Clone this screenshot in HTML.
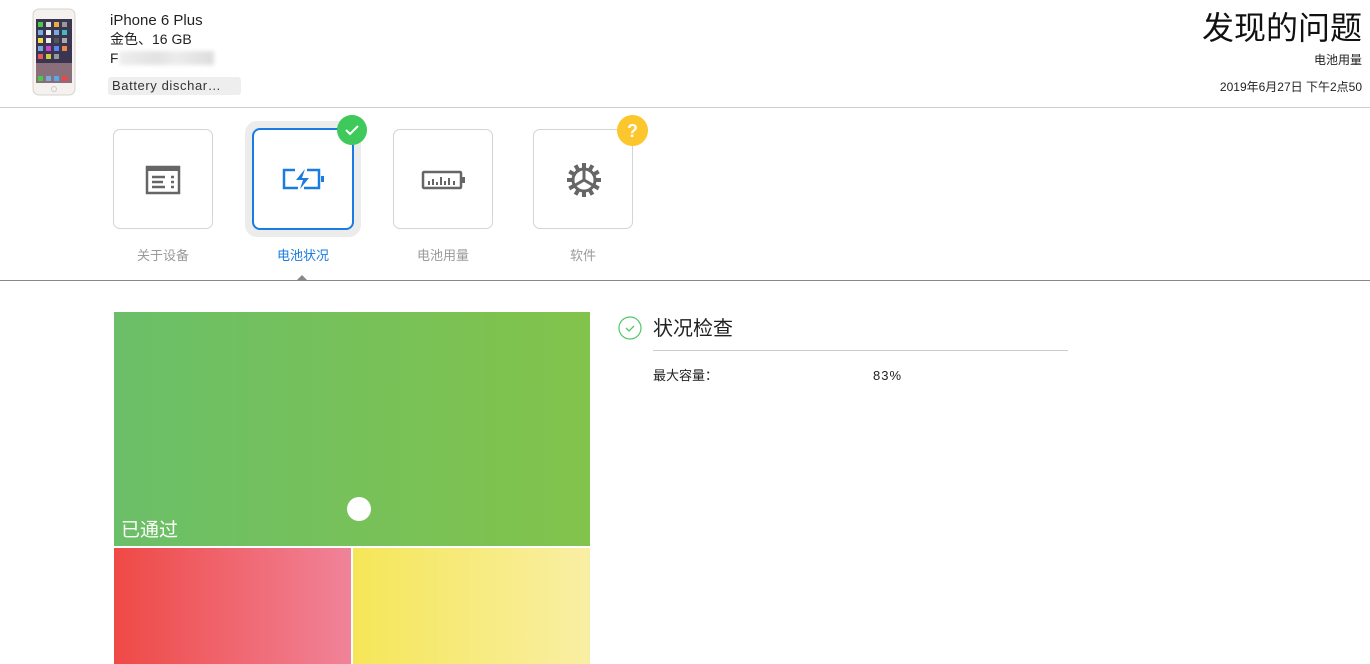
<!DOCTYPE html>
<html><head><meta charset="utf-8">
<style>
*{margin:0;padding:0;box-sizing:border-box}
body{width:1370px;height:664px;overflow:hidden;background:#fff;position:relative;font-family:"Liberation Sans","Noto Sans CJK SC",sans-serif;color:#222}
.a{position:absolute;line-height:1.2}
.tab{position:absolute;top:129px;width:100px;height:100px;border:1px solid #d4d4d4;border-radius:7px;background:#fff}
.lbl{position:absolute;top:245px;width:100px;text-align:center;font-size:13px;color:#9a9a9a}
</style></head><body>
<svg class="a" style="left:32px;top:8px" width="44" height="88" viewBox="0 0 44 88">
<rect x="1" y="1" width="42" height="86" rx="6" fill="#f4f1ee" stroke="#d8d2cc"/>
<rect x="4" y="11" width="36" height="64" fill="#3a3550"/>
<rect x="4" y="55" width="36" height="20" fill="#8a6f7a"/>
<g fill="#7ad">
<rect x="6" y="14" width="5" height="5" fill="#4c4"/><rect x="14" y="14" width="5" height="5" fill="#ddd"/><rect x="22" y="14" width="5" height="5" fill="#ea4"/><rect x="30" y="14" width="5" height="5" fill="#999"/>
<rect x="6" y="22" width="5" height="5"/><rect x="14" y="22" width="5" height="5" fill="#eee"/><rect x="22" y="22" width="5" height="5"/><rect x="30" y="22" width="5" height="5" fill="#4bb"/>
<rect x="6" y="30" width="5" height="5" fill="#ed4"/><rect x="14" y="30" width="5" height="5" fill="#eee"/><rect x="22" y="30" width="5" height="5" fill="#555"/><rect x="30" y="30" width="5" height="5" fill="#aaa"/>
<rect x="6" y="38" width="5" height="5"/><rect x="14" y="38" width="5" height="5" fill="#c4c"/><rect x="22" y="38" width="5" height="5" fill="#58e"/><rect x="30" y="38" width="5" height="5" fill="#e84"/>
<rect x="6" y="46" width="5" height="5" fill="#e55"/><rect x="14" y="46" width="5" height="5" fill="#cc4"/><rect x="22" y="46" width="5" height="5" fill="#999"/>
<rect x="6" y="68" width="5" height="5" fill="#4c4"/><rect x="14" y="68" width="5" height="5"/><rect x="22" y="68" width="5" height="5" fill="#5ae"/><rect x="30" y="68" width="5" height="5" fill="#e44"/>
</g>
<circle cx="22" cy="81" r="2.5" fill="none" stroke="#ccc"/>
</svg>
<div class="a" style="left:110px;top:12px;font-size:15px;color:#222">iPhone 6 Plus</div>
<div class="a" style="left:110px;top:31px;font-size:14px;color:#222">金色、16 GB</div>
<div class="a" style="left:110px;top:50px;font-size:14px;color:#222">F<span style="display:inline-block;width:95px;height:14px;vertical-align:-2px;background:linear-gradient(90deg,#eee,#e2e2e2 40%,#ececec 60%,#ddd);filter:blur(2px)"></span></div>
<div class="a" style="left:108px;top:77px;width:133px;height:18px;background:#eee;border-radius:3px;font-size:13px;letter-spacing:0.6px;color:#333;padding:1px 4px;line-height:16px">Battery dischar…</div>
<div class="a" style="right:8px;top:9px;font-size:32px;color:#111;line-height:38px">发现的问题</div>
<div class="a" style="right:8px;top:53px;font-size:12px;color:#222">电池用量</div>
<div class="a" style="right:8px;top:80px;font-size:12px;color:#222">2019年6月27日 下午2点50</div>
<div class="a" style="left:0;top:107px;width:1370px;height:1px;background:#cfcfcf"></div>

<div class="tab" style="left:113px">
<svg class="a" style="left:31px;top:35px" width="36" height="30" viewBox="0 0 36 30"><rect x="2" y="2" width="32" height="26" fill="none" stroke="#666" stroke-width="2.5"/><rect x="2" y="2" width="32" height="4" fill="#666"/><g stroke="#666" stroke-width="2.5"><line x1="7" y1="12" x2="20" y2="12"/><line x1="7" y1="17" x2="18" y2="17"/><line x1="7" y1="22" x2="20" y2="22"/><line x1="26" y1="12" x2="29" y2="12"/><line x1="26" y1="17" x2="29" y2="17"/><line x1="26" y1="22" x2="29" y2="22"/></g></svg>
</div>
<div class="a" style="left:245px;top:121px;width:116px;height:116px;background:#ececec;border-radius:12px"></div>
<div class="tab" style="left:252px;top:128px;width:102px;height:102px;border:2px solid #1a7be0;border-radius:8px">
<svg class="a" style="left:27px;top:37px" width="46" height="24" viewBox="0 0 46 24"><path d="M14 3H3v18h14" fill="none" stroke="#1a7be0" stroke-width="2.5"/><path d="M26 3h12v18H23" fill="none" stroke="#1a7be0" stroke-width="2.5"/><rect x="40" y="9" width="3" height="6" fill="#1a7be0"/><path d="M24 2L15 13h7l-3 9 9-11h-7z" fill="#1a7be0"/></svg>
</div>
<svg class="a" style="left:337px;top:115px" width="30" height="30"><circle cx="15" cy="15" r="15" fill="#3ec95a"/><path d="M9 15l4 4 8-8" fill="none" stroke="#fff" stroke-width="2"/></svg>
<div class="tab" style="left:393px">
<svg class="a" style="left:27px;top:40px" width="46" height="20" viewBox="0 0 46 20"><rect x="2" y="2" width="38" height="16" rx="1" fill="none" stroke="#666" stroke-width="2.5"/><rect x="41" y="7" width="3" height="6" fill="#666"/><g stroke="#666" stroke-width="2"><line x1="8" y1="11" x2="8" y2="15"/><line x1="12" y1="9" x2="12" y2="15"/><line x1="16" y1="12" x2="16" y2="15"/><line x1="20" y1="7" x2="20" y2="15"/><line x1="24" y1="11" x2="24" y2="15"/><line x1="28" y1="8" x2="28" y2="15"/><line x1="33" y1="11" x2="33" y2="15"/></g></svg>
</div>
<div class="tab" style="left:533px">
<svg class="a" style="left:32px;top:32px" width="36" height="36" viewBox="0 0 36 36"><g fill="#666"><g id="t"><rect x="16" y="1" width="4" height="6"/></g><use href="#t" transform="rotate(30 18 18)"/><use href="#t" transform="rotate(60 18 18)"/><use href="#t" transform="rotate(90 18 18)"/><use href="#t" transform="rotate(120 18 18)"/><use href="#t" transform="rotate(150 18 18)"/><use href="#t" transform="rotate(180 18 18)"/><use href="#t" transform="rotate(210 18 18)"/><use href="#t" transform="rotate(240 18 18)"/><use href="#t" transform="rotate(270 18 18)"/><use href="#t" transform="rotate(300 18 18)"/><use href="#t" transform="rotate(330 18 18)"/></g><circle cx="18" cy="18" r="11" fill="none" stroke="#666" stroke-width="3"/><path d="M18 18L18 7M18 18L8.5 23.5M18 18L27.5 23.5" stroke="#666" stroke-width="3"/></svg>
</div>
<svg class="a" style="left:617px;top:115px" width="31" height="31"><circle cx="15.5" cy="15.5" r="15.5" fill="#fcc62d"/><text x="15.5" y="22" text-anchor="middle" font-family="Liberation Sans" font-weight="bold" font-size="18" fill="#fff">?</text></svg>
<div class="lbl" style="left:113px">关于设备</div>
<div class="lbl" style="left:253px;color:#1a7be0">电池状况</div>
<div class="lbl" style="left:393px">电池用量</div>
<div class="lbl" style="left:533px">软件</div>
<div class="a" style="left:0;top:280px;width:1370px;height:1px;background:#888"></div>
<div class="a" style="left:297px;top:275px;width:0;height:0;border-left:5px solid transparent;border-right:5px solid transparent;border-bottom:5px solid #888"></div>

<div class="a" style="left:114px;top:312px;width:476px;height:234px;background:linear-gradient(90deg,#6bbf68,#82c34b)"></div>
<div class="a" style="left:347px;top:497px;width:24px;height:24px;border-radius:50%;background:#fff"></div>
<div class="a" style="left:121px;top:520px;font-size:19px;color:#fff">已通过</div>
<div class="a" style="left:114px;top:548px;width:237px;height:116px;background:linear-gradient(90deg,#ef4946,#f08399)"></div>
<div class="a" style="left:353px;top:548px;width:237px;height:116px;background:linear-gradient(90deg,#f5e658,#f9efa4)"></div>

<svg class="a" style="left:618px;top:316px" width="24" height="24"><circle cx="12" cy="12" r="11" fill="none" stroke="#4fc86a" stroke-width="1.2"/><path d="M8 12l3 3 5-5" fill="none" stroke="#4fc86a" stroke-width="1.3"/></svg>
<div class="a" style="left:653px;top:317px;font-size:20px;line-height:24px;color:#222">状况检查</div>
<div class="a" style="left:653px;top:350px;width:415px;height:1px;background:#ccc"></div>
<div class="a" style="left:653px;top:367px;font-size:13px;line-height:18px;color:#222">最大容量：</div>
<div class="a" style="left:873px;top:367px;font-size:13px;line-height:18px;color:#222;letter-spacing:1px">83%</div>
</body></html>
